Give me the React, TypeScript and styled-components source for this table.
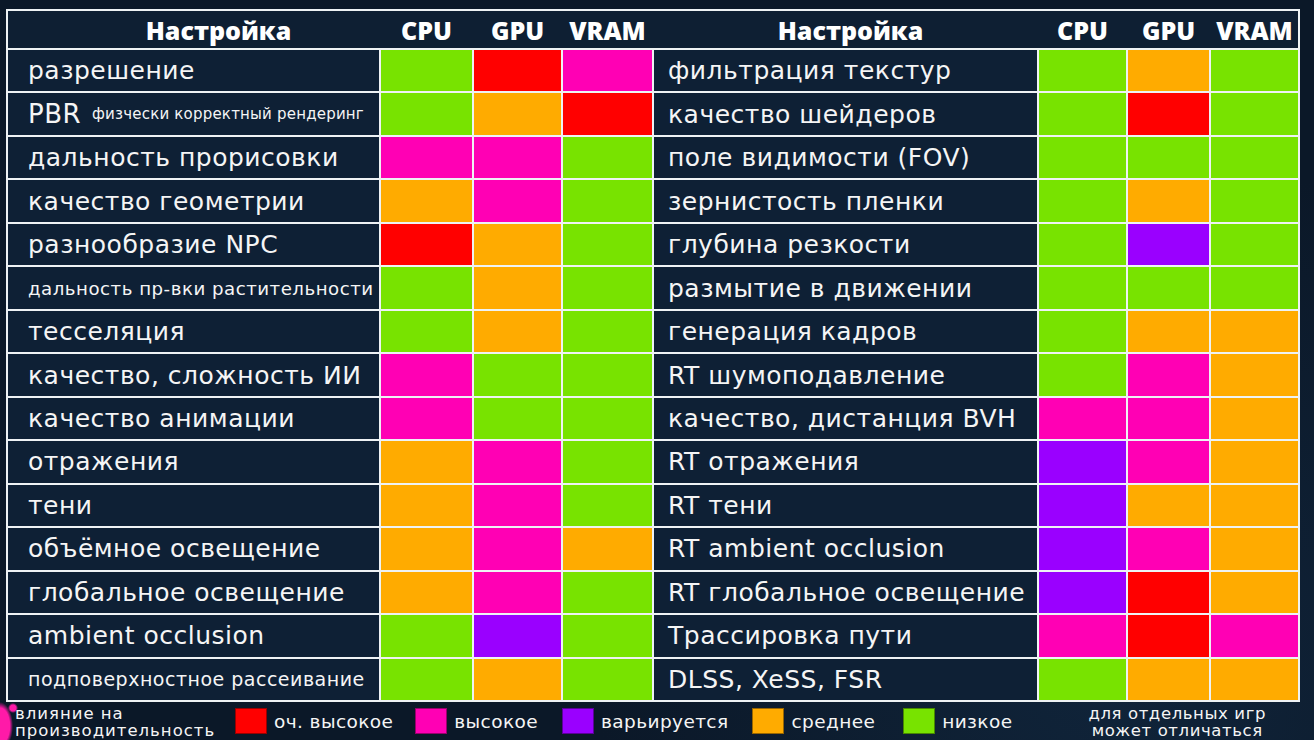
import React from 'react';
import styled, { createGlobalStyle } from 'styled-components';

type Level = 'vh' | 'h' | 'v' | 'm' | 'l';

const LEVEL_COLORS: Record<Level, string> = {
  vh: '#ff0000',
  h: '#ff00b4',
  v: '#9a00ff',
  m: '#ffab00',
  l: '#78e300',
};

const COLS = '371px 91px 87px 89px 383px 87px 81px 87px';

const GlobalStyle = createGlobalStyle`
  html, body {
    margin: 0;
    padding: 0;
    background: #0b1828;
  }
  body {
    font-family: 'DejaVu Sans', 'Noto Sans', sans-serif;
    color: #f5f5f5;
  }
`;

const Page = styled.div`
  width: 1314px;
  height: 740px;
  box-sizing: border-box;
  padding: 9px 14px 0 6px;
  overflow: hidden;
  background:
    radial-gradient(ellipse 13px 24px at 0px 726px, #ff1aa8 0%, #ff1aa8 75%, rgba(255, 26, 168, 0) 100%),
    radial-gradient(circle 5px at 13px 708px, #ff1aa8 0%, #ff1aa8 60%, rgba(255, 26, 168, 0) 100%),
    radial-gradient(circle at 85% 90%, #10243a 0%, rgba(16, 36, 58, 0) 40%),
    #0b1828;
`;

const Table = styled.div`
  display: flex;
  flex-direction: column;
  gap: 2px;
  width: 1294px;
  height: 693px;
  box-sizing: border-box;
  border: 2px solid #eef2f4;
  background: #eef2f4;
`;

const HeaderRow = styled.div`
  display: grid;
  grid-template-columns: ${COLS};
  gap: 2px;
  height: 37px;
  flex: none;
  background: #0e1f33;
`;

const HeaderCell = styled.div<{ $pad?: number }>`
  display: flex;
  align-items: center;
  justify-content: center;
  padding-left: ${({ $pad }) => $pad ?? 0}px;
  font-family: 'Open Sans', 'DejaVu Sans', sans-serif;
  font-weight: 800;
  font-size: 25px;
  color: #ffffff;
`;

const Row = styled.div`
  display: grid;
  grid-template-columns: ${COLS};
  gap: 2px;
  flex: 1;
`;

const NameCell = styled.div<{ $pad: number; $size: number }>`
  display: flex;
  align-items: center;
  gap: 11px;
  padding-left: ${({ $pad }) => $pad}px;
  background: #0e2035;
  font-size: ${({ $size }) => $size}px;
  letter-spacing: 0.5px;
  white-space: nowrap;
  overflow: hidden;
`;

const Note = styled.span`
  font-size: 15px;
  letter-spacing: 0.2px;
`;

const ColorCell = styled.div<{ $level: Level }>`
  background: ${({ $level }) => LEVEL_COLORS[$level]};
`;

const Legend = styled.div`
  display: flex;
  align-items: center;
  height: 38px;
  padding-left: 9px;
`;

const LegendTitle = styled.div`
  font-size: 16.5px;
  line-height: 17px;
  letter-spacing: 1px;
  width: 220px;
  margin-top: 2px;
`;

const LegendItem = styled.div<{ $gap: number }>`
  display: flex;
  align-items: center;
  gap: 7px;
  margin-right: ${({ $gap }) => $gap}px;
  font-size: 18.5px;
  letter-spacing: 0.4px;
`;

const Swatch = styled.span<{ $level: Level }>`
  width: 32px;
  height: 26px;
  background: ${({ $level }) => LEVEL_COLORS[$level]};
  border: 1px solid rgba(0, 0, 0, 0.4);
  box-sizing: border-box;
`;

const Disclaimer = styled.div`
  margin-left: auto;
  margin-right: 34px;
  text-align: center;
  font-size: 16.5px;
  line-height: 17px;
  letter-spacing: 0.6px;
  margin-top: 2px;
`;

interface Setting {
  name: string;
  note?: string;
  size?: number;
  levels: [Level, Level, Level];
}

const LEFT: Setting[] = [
  { name: 'разрешение', levels: ['l', 'vh', 'h'] },
  { name: 'PBR', note: 'физчески корректный рендеринг', size: 26, levels: ['l', 'm', 'vh'] },
  { name: 'дальность прорисовки', levels: ['h', 'h', 'l'] },
  { name: 'качество геометрии', levels: ['m', 'h', 'l'] },
  { name: 'разнообразие NPC', levels: ['vh', 'm', 'l'] },
  { name: 'дальность пр-вки растительности', size: 18.2, levels: ['l', 'm', 'l'] },
  { name: 'тесселяция', levels: ['l', 'm', 'l'] },
  { name: 'качество, сложность ИИ', levels: ['h', 'l', 'l'] },
  { name: 'качество анимации', levels: ['h', 'l', 'l'] },
  { name: 'отражения', levels: ['m', 'h', 'l'] },
  { name: 'тени', levels: ['m', 'h', 'l'] },
  { name: 'объёмное освещение', levels: ['m', 'h', 'm'] },
  { name: 'глобальное освещение', levels: ['m', 'h', 'l'] },
  { name: 'ambient occlusion', levels: ['l', 'v', 'l'] },
  { name: 'подповерхностное рассеивание', size: 19, levels: ['l', 'm', 'l'] },
];

const RIGHT: Setting[] = [
  { name: 'фильтрация текстур', levels: ['l', 'm', 'l'] },
  { name: 'качество шейдеров', levels: ['l', 'vh', 'l'] },
  { name: 'поле видимости (FOV)', levels: ['l', 'l', 'l'] },
  { name: 'зернистость пленки', levels: ['l', 'm', 'l'] },
  { name: 'глубина резкости', levels: ['l', 'v', 'l'] },
  { name: 'размытие в движении', levels: ['l', 'l', 'l'] },
  { name: 'генерация кадров', levels: ['l', 'm', 'm'] },
  { name: 'RT шумоподавление', levels: ['l', 'h', 'm'] },
  { name: 'качество, дистанция BVH', levels: ['h', 'h', 'm'] },
  { name: 'RT отражения', levels: ['v', 'h', 'm'] },
  { name: 'RT тени', levels: ['v', 'm', 'm'] },
  { name: 'RT ambient occlusion', levels: ['v', 'h', 'm'] },
  { name: 'RT глобальное освещение', levels: ['v', 'vh', 'm'] },
  { name: 'Трассировка пути', levels: ['h', 'vh', 'h'] },
  { name: 'DLSS, XeSS, FSR', levels: ['l', 'm', 'm'] },
];

const LEGEND: { level: Level; label: string; gap: number }[] = [
  { level: 'vh', label: 'оч. высокое', gap: 22 },
  { level: 'h', label: 'высокое', gap: 24 },
  { level: 'v', label: 'варьируется', gap: 24 },
  { level: 'm', label: 'среднее', gap: 28 },
  { level: 'l', label: 'низкое', gap: 0 },
];

function Half({ item, pad }: { item: Setting; pad: number }) {
  return (
    <>
      <NameCell $pad={pad} $size={item.size ?? 25}>
        {item.name}
        {item.note && <Note>{item.note}</Note>}
      </NameCell>
      {item.levels.map((level, i) => (
        <ColorCell key={i} $level={level} />
      ))}
    </>
  );
}

export default function App() {
  return (
    <Page>
      <GlobalStyle />
      <Table>
        <HeaderRow>
          <HeaderCell $pad={50}>Настройка</HeaderCell>
          <HeaderCell>CPU</HeaderCell>
          <HeaderCell>GPU</HeaderCell>
          <HeaderCell>VRAM</HeaderCell>
          <HeaderCell $pad={10}>Настройка</HeaderCell>
          <HeaderCell>CPU</HeaderCell>
          <HeaderCell>GPU</HeaderCell>
          <HeaderCell>VRAM</HeaderCell>
        </HeaderRow>
        {LEFT.map((left, i) => (
          <Row key={left.name}>
            <Half item={left} pad={20} />
            <Half item={RIGHT[i]} pad={14} />
          </Row>
        ))}
      </Table>
      <Legend>
        <LegendTitle>
          влияние на
          <br />
          производительность
        </LegendTitle>
        {LEGEND.map((entry) => (
          <LegendItem key={entry.level} $gap={entry.gap}>
            <Swatch $level={entry.level} />
            {entry.label}
          </LegendItem>
        ))}
        <Disclaimer>
          для отдельных игр
          <br />
          может отличаться
        </Disclaimer>
      </Legend>
    </Page>
  );
}
